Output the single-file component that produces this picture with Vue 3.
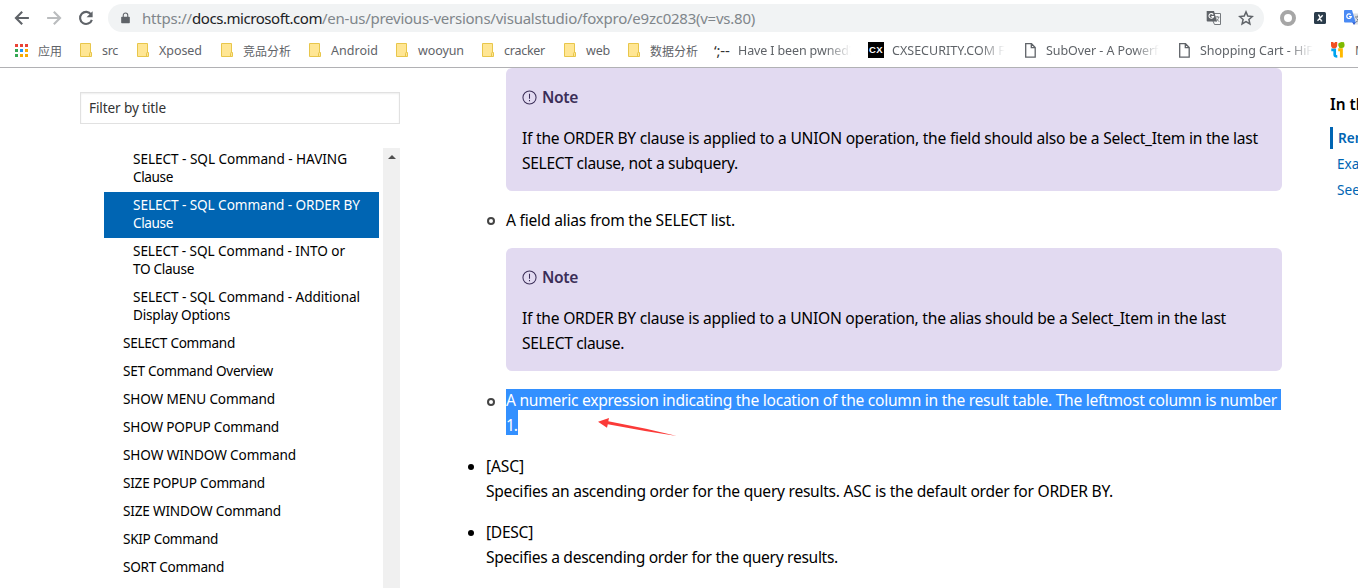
<script setup>
// Tunes tracking so that a run of text occupies the given width in pixels.
const vFit = {
  mounted(el, { value }) {
    if (!value) return
    const natural = el.getBoundingClientRect().width
    el.style.letterSpacing = (value - natural) / el.textContent.length + 'px'
  },
}

const bookmarks = [
  { icon: 'apps', label: '应用', w: 65, gap: 23, cjk: true },
  { icon: 'folder', label: 'src', w: 57, gap: 22, fit: 16 },
  { icon: 'folder', label: 'Xposed', w: 84, gap: 22, fit: 43 },
  { icon: 'folder', label: '竞品分析', w: 88, gap: 22, cjk: true },
  { icon: 'folder', label: 'Android', w: 87, gap: 22, fit: 47 },
  { icon: 'folder', label: 'wooyun', w: 86, gap: 22, fit: 46 },
  { icon: 'folder', label: 'cracker', w: 82, gap: 22, fit: 41 },
  { icon: 'folder', label: 'web', w: 64, gap: 22, fit: 24 },
  { icon: 'folder', label: '数据分析', w: 86, gap: 22, cjk: true },
  { icon: 'pwned', label: 'Have I been pwned?', w: 154, gap: 24, fit: 116, clip: true },
  { icon: 'cx', label: 'CXSECURITY.COM Fr', w: 157, gap: 24, fit: 118, clip: true },
  { icon: 'page', label: 'SubOver - A Powerfu', w: 154, gap: 21, fit: 120, clip: true },
  { icon: 'page', label: 'Shopping Cart - HiFi', w: 152, gap: 21, fit: 116, clip: true },
  { icon: 'joom', label: 'M', w: 60, gap: 24, fit: 12 },
]

const topics = [
  { lines: [['SELECT - SQL Command - HAVING', 214], ['Clause', 40]] },
  { lines: [['SELECT - SQL Command - ORDER BY', 227], ['Clause', 40]], active: true },
  { lines: [['SELECT - SQL Command - INTO or', 212], ['TO Clause', 61]] },
  { lines: [['SELECT - SQL Command - Additional', 227], ['Display Options', 97]] },
  { lines: [['SELECT Command', 112]], up: true },
  { lines: [['SET Command Overview', 150]], up: true },
  { lines: [['SHOW MENU Command', 152]], up: true },
  { lines: [['SHOW POPUP Command', 156]], up: true },
  { lines: [['SHOW WINDOW Command', 173]], up: true },
  { lines: [['SIZE POPUP Command', 142]], up: true },
  { lines: [['SIZE WINDOW Command', 158]], up: true },
  { lines: [['SKIP Command', 95]], up: true },
  { lines: [['SORT Command', 101]], up: true },
]

const noteField = [
  ['If the ORDER BY clause is applied to a UNION operation, the field should also be a Select_Item in the last', 736],
  ['SELECT clause, not a subquery.', 216],
]
const noteAlias = [
  ['If the ORDER BY clause is applied to a UNION operation, the alias should be a Select_Item in the last', 704],
  ['SELECT clause.', 102],
]
</script>

<template>
  <div class="window">
    <header class="chrome">
      <div class="toolbar">
        <svg class="nav" viewBox="0 0 24 24"><path d="M19.5 12H6M12.2 5.2 5.4 12l6.8 6.8" /></svg>
        <svg class="nav dim" viewBox="0 0 24 24"><path d="M4.5 12H18M11.8 5.2l6.8 6.8-6.8 6.8" /></svg>
        <svg class="nav" viewBox="0 0 24 24"><path d="M17.6 8.2A6.6 6.6 0 1 0 18.4 14" /><path class="solid" d="M19.2 4.6v6.600h-6.600z" /></svg>
        <div class="omnibox">
          <svg class="lock" viewBox="0 0 10 12"><path d="M1 4.5h8a.8.8 0 0 1 .8.8V11a.8.8 0 0 1-.8.8H1a.8.8 0 0 1-.8-.8V5.300a.8.8 0 0 1 .8-.8z" fill="#5f6368" /><path d="M2.500 5V3a2.500 2.500 0 0 1 5 0v2" fill="none" stroke="#5f6368" stroke-width="1.200" /></svg>
          <div class="url"><span v-fit="50">https://</span><span v-fit="130" class="host">docs.microsoft.com</span><span v-fit="433">/en-us/previous-versions/visualstudio/foxpro/e9zc0283(v=vs.80)</span></div>
          <svg class="translate" viewBox="0 0 16 16">
            <path d="M6 3.500h8.500v11H8.500L7 11" fill="#f8f9fa" stroke="#75797d" />
            <path d="M1 1h7l3 10.500H1.500a.8.8 0 0 1-.8-.8V1.500z" fill="#5f6368" />
            <path d="M7.200 4.600A2.300 2.300 0 1 0 7.500 6.500H5.300" fill="none" stroke="#fff" stroke-width="1.100" />
            <path d="M9 7h4.500M11.200 6v1M12.800 7c-.5 2.200-1.500 3.500-3 4.500M10.300 8.500l2.900 3.300" fill="none" stroke="#75797d" stroke-width=".9" />
          </svg>
          <svg class="star" viewBox="0 0 16 16"><path d="m8 1.900 1.800 4.200 4.500.4-3.400 3 1 4.400L8 11.600l-3.900 2.300 1-4.400-3.400-3 4.500-.4z" fill="none" stroke="#5f6368" stroke-width="1.500" /></svg>
        </div>
        <div class="ring"></div>
        <svg class="xtool" viewBox="0 0 12 12"><rect width="12" height="12" rx="1.500" fill="#2b3c4b" /><path d="M4 3.200h1l2.200 5.600h1M8.700 3.200 3.500 8.800" fill="none" stroke="#fff" stroke-width="1.300" /></svg>
        <svg class="gtool" viewBox="0 0 18 16">
          <path d="M8 3.500h9v11H10z" fill="#dcdfe3" />
          <path d="m8 12 4 0-2 3z" fill="#3059c9" />
          <path d="M1 0h7l3.700 12.500H1a1 1 0 0 1-1-1V1a1 1 0 0 1 1-1z" fill="#4a8af4" />
          <path d="M6.800 4.700a2.300 2.300 0 1 0 .5 2H5" fill="none" stroke="#fff" stroke-width="1.200" />
          <path d="M11 7h6M14 5.500V7M16 7c-.8 2.500-2 4-4 5M12.500 8.500l4 4" fill="none" stroke="#737b87" />
        </svg>
      </div>
      <nav class="bookmarks">
        <div v-for="b in bookmarks" :key="b.label" class="bookmark" :style="{ width: b.w + 'px' }">
          <div class="glyph" :style="{ width: b.gap + 'px' }">
            <svg v-if="b.icon === 'apps'" width="13" height="13" viewBox="0 0 13 13">
              <path d="M0 0h3v3H0zM5 0h3v3H5zM10 0h3v3h-3z" fill="#ea4335" />
              <path d="M0 5h3v3H0z" fill="#34a853" /><path d="M5 5h3v3H5z" fill="#2196f3" /><path d="M10 5h3v3h-3z" fill="#f9ab00" />
              <path d="M0 10h3v3H0z" fill="#34a853" /><path d="M5 10h3v3H5zM10 10h3v3h-3z" fill="#f9ab00" />
            </svg>
            <svg v-else-if="b.icon === 'folder'" width="13" height="14" viewBox="0 0 13 14">
              <path d="M.5.5h10v9h1v4H.5z" fill="#ffe694" stroke="#e8c64b" /><path d="M9.500 13.500v-3.200q0-.8 1-.8" fill="none" stroke="#e8c64b" />
            </svg>
            <span v-else-if="b.icon === 'pwned'" class="pwned">‘;--</span>
            <span v-else-if="b.icon === 'cx'" class="cx"><span v-fit="14">CX</span></span>
            <svg v-else-if="b.icon === 'page'" width="11" height="15" viewBox="0 0 11 15"><path d="M.7.700h5.800l3.700 3.800v9.700H.7zM6.300.7v4h3.900" fill="none" stroke="#5f6368" stroke-width="1.300" /></svg>
            <svg v-else width="14" height="16" viewBox="0 0 14 16">
              <path d="M.3 7.800h3.400v5q0 1.700 2.600 1.700" fill="none" stroke="#00a4ef" stroke-width="2.700" />
              <path d="M7.200 7.800h3.200v7.700" fill="none" stroke="#ffb900" stroke-width="2.900" />
              <path d="M0 0h2.200l.8 1.500L4 0h2.200v3.300a3.100 3.100 0 0 1-6.200 0z" fill="#f25022" />
              <path d="M7.300 1.500 9 .6 10.500 0l2.500.3.500 2.200a3.100 3.100 0 0 1-6.200 1z" fill="#7fba00" />
            </svg>
          </div>
          <div class="label" :class="{ clip: b.clip, cjk: b.cjk }"><span v-fit="b.fit">{{ b.label }}</span></div>
        </div>
      </nav>
    </header>

    <main class="page">
      <aside class="sidebar">
        <div class="filter"><span v-fit="77">Filter by title</span></div>
        <div class="tree">
          <ul class="topics">
            <li v-for="t in topics" :key="t.lines[0][0]" :class="{ active: t.active, up: t.up }">
              <div v-for="l in t.lines" :key="l[0]"><span v-fit="l[1]">{{ l[0] }}</span></div>
            </li>
          </ul>
          <div class="scrollbar"><i></i></div>
        </div>
      </aside>

      <article class="content">
        <section class="note">
          <h4><svg viewBox="0 0 16 16"><circle cx="8" cy="8" r="7" /><path d="M8 4v5.200M8 10.600v1.400" /></svg><span v-fit="36">Note</span></h4>
          <p v-for="l in noteField" :key="l[0]"><span v-fit="l[1]">{{ l[0] }}</span></p>
        </section>
        <p class="sub first"><i class="hollow"></i><span v-fit="229">A field alias from the SELECT list.</span></p>
        <section class="note">
          <h4><svg viewBox="0 0 16 16"><circle cx="8" cy="8" r="7" /><path d="M8 4v5.200M8 10.600v1.400" /></svg><span v-fit="36">Note</span></h4>
          <p v-for="l in noteAlias" :key="l[0]"><span v-fit="l[1]">{{ l[0] }}</span></p>
        </section>
        <div class="sub picked">
          <i class="hollow"></i>
          <p class="sel one"><span v-fit="771">A numeric expression indicating the location of the column in the result table. The leftmost column is number</span></p>
          <p class="sel two"><span v-fit="11">1.</span></p>
          <svg class="arrow" viewBox="0 0 80 20"><path d="M0 4.700 11 .9 10.300 4.200 48 11.700 79 18.900 47 14 9.800 7.200 9 10.800z" fill="#fb3a38" /></svg>
        </div>
        <div class="item">
          <i class="dot"></i>
          <p><span v-fit="38">[ASC]</span></p>
          <p><span v-fit="627">Specifies an ascending order for the query results. ASC is the default order for ORDER BY.</span></p>
        </div>
        <div class="item">
          <i class="dot"></i>
          <p><span v-fit="47">[DESC]</span></p>
          <p><span v-fit="352">Specifies a descending order for the query results.</span></p>
        </div>
      </article>

      <aside class="outline">
        <h3>In this article</h3>
        <a class="current">Remarks</a>
        <a>Example</a>
        <a>See Also</a>
      </aside>
    </main>
  </div>
</template>

<style>
html, body { margin: 0; overflow: hidden; background: #fff; }
</style>

<style scoped>
.window { width: 1358px; height: 588px; overflow: hidden; display: flex; flex-direction: column; font-family: "Noto Sans", "Open Sans", "Noto Sans CJK SC", sans-serif; color: #000; background: #fff; white-space: nowrap; }
p, h3, h4, ul { margin: 0; padding: 0; list-style: none; }
span { display: inline-block; white-space: pre; }

.chrome { height: 67px; flex: none; border-bottom: 1px solid #b1b1b4; box-sizing: content-box; }
.toolbar { height: 28px; padding: 4px 0 0 11px; display: flex; align-items: center; }
.nav { width: 22px; height: 22px; flex: none; margin-right: 10px; fill: none; stroke: #5f6368; stroke-width: 2.300; }
.nav.dim { stroke: #babcbe; }
.nav .solid { fill: #5f6368; stroke: none; }
.omnibox { width: 1156px; height: 28px; margin-left: 1px; flex: none; box-sizing: border-box; border-radius: 14px; background: #f1f3f4; display: flex; align-items: center; }
.lock { width: 9px; height: 12px; margin: 0 16px 0 13px; flex: none; }
.url { width: 1068px; margin-left: -4px; font-size: 15px; line-height: 28px; height: 28px; color: #80868b; flex: none; }
.host { color: #202124; }
.translate { width: 16px; height: 16px; margin-left: -4px; flex: none; }
.star { width: 16px; height: 16px; margin-left: 16px; flex: none; }
.ring { width: 8px; height: 8px; border: 4px solid #a6a6a6; border-radius: 50%; margin-left: 16px; flex: none; }
.xtool { width: 12px; height: 12px; margin-left: 18px; flex: none; }
.gtool { width: 18px; height: 16px; margin-left: 18px; flex: none; }

.bookmarks { height: 36px; padding-left: 15px; display: flex; align-items: center; }
.bookmark { flex: none; display: flex; align-items: center; color: #5f6368; font-size: 12.500px; line-height: 20px; }
.glyph { flex: none; display: flex; align-items: center; height: 20px; }
.label { padding-top: 1px; }
.label.cjk { font-family: "Noto Sans CJK SC", sans-serif; font-size: 12px; }
.label.clip { width: 113px; overflow: hidden; -webkit-mask-image: linear-gradient(90deg, #000 88px, transparent 113px); mask-image: linear-gradient(90deg, #000 88px, transparent 113px); }
.pwned { color: #333; font-size: 15px; letter-spacing: -.2px; }
.cx { width: 16px; height: 16px; background: #000; color: #fff; font: bold 9.500px/16px "Liberation Sans", sans-serif; text-align: center; }

.page { flex: 1; min-height: 0; display: flex; }
.sidebar { width: 320px; margin-left: 80px; flex: none; display: flex; flex-direction: column; }
.filter { box-sizing: border-box; height: 32px; flex: none; margin-top: 24px; padding-left: 8px; border: 1px solid #e1e1e1; box-shadow: inset 0 1px 2px #eee; font-size: 13.600px; line-height: 30px; color: #333; }
.tree { display: flex; flex: 1; min-height: 0; margin-top: 24px; }
.topics { width: 275px; margin: -2px 4px 0 24px; font-size: 13.600px; line-height: 18px; }
.topics li { padding: 4px 0 6px 29px; }
.topics li.up { padding-left: 19px; }
.topics li.active { background: #0065b3; color: #fff; }
.scrollbar { width: 17px; background: #f0f0f0; display: flex; justify-content: center; }
.scrollbar i { width: 0; height: 0; margin-top: 7px; border: 4px solid transparent; border-top: 0; border-bottom-color: #505050; }

.content { width: 816px; margin-left: 66px; flex: none; font-size: 15.600px; line-height: 25px; }
.note { box-sizing: border-box; height: 123px; margin-left: 40px; width: 776px; padding: 17px 16px 0; border-radius: 6px; background: #e2daf1; }
.note h4 { display: flex; align-items: center; height: 25px; margin-bottom: 16px; font-size: 15.600px; font-weight: 600; color: #3b2e58; }
.note h4 svg { width: 15px; height: 15px; margin-right: 5px; fill: none; stroke: #3b2e58; stroke-width: 1.100; }
.sub { position: relative; margin-left: 40px; }
.sub.first { margin-top: 17px; margin-bottom: 15px; }
.hollow { position: absolute; left: -19px; top: 9px; width: 4px; height: 4px; border: 2px solid #444; border-radius: 50%; box-sizing: content-box; }
.picked { margin-top: 18px; height: 65px; }
.sel { background: #3390ff; color: #fff; }
.sel.one { width: 775px; height: 21px; line-height: 23px; }
.sel.two { width: 12px; height: 25px; line-height: 31px; }
.arrow { position: absolute; left: 92px; top: 28px; width: 80px; height: 20px; }
.item { position: relative; margin-left: 20px; margin-bottom: 16px; }
.dot { position: absolute; left: -18px; top: 10px; width: 6px; height: 6px; border-radius: 50%; background: #000; }

.outline { margin-left: 48px; padding-top: 25px; width: 28px; overflow: hidden; flex: none; display: flex; flex-direction: column; font-size: 13.600px; color: #0065b3; }
.outline h3 { font-size: 15.400px; line-height: 24px; font-weight: 600; color: #000; margin-bottom: 10px; }
.outline a { padding-left: 7px; line-height: 22px; margin-bottom: 4px; }
.outline a.current { border-left: 3px solid #0065b3; padding-left: 5px; font-weight: 600; }
</style>
